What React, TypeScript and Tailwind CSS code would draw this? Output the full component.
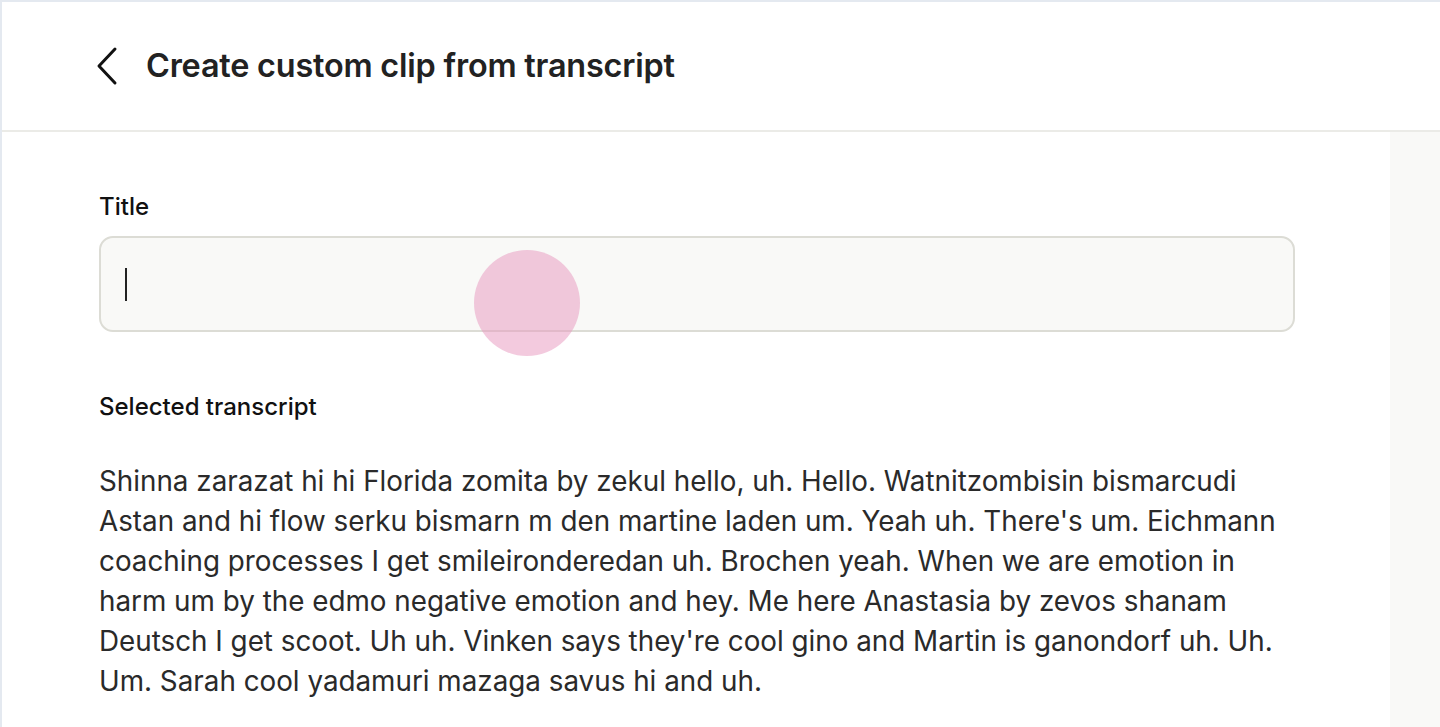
import React from "react";

export default function App() {
  const text =
    "Shinna zarazat hi hi Florida zomita by zekul hello, uh. Hello. Watnitzombisin bismarcudi Astan and hi flow serku bismarn m den martine laden um. Yeah uh. There's um. Eichmann coaching processes I get smileironderedan uh. Brochen yeah. When we are emotion in harm um by the edmo negative emotion and hey. Me here Anastasia by zevos shanam Deutsch I get scoot. Uh uh. Vinken says they're cool gino and Martin is ganondorf uh. Uh. Um. Sarah cool yadamuri mazaga savus hi and uh.";
  return (
    <div
      className="w-[1440px] h-[727px] overflow-hidden bg-white border-l-2 border-t-2 border-[#e4e9f0] flex flex-col"
      style={{ fontFamily: "Inter, 'Noto Sans', sans-serif" }}
    >
      <header className="h-[130px] shrink-0 border-b-2 border-[#ebebe7] flex items-center pl-[93px]">
        <svg width="24" height="40" viewBox="0 0 24 40" className="mr-[27px]">
          <path d="M20 3 L4 20 L20 37" fill="none" stroke="#111" strokeWidth="3" strokeLinecap="round" strokeLinejoin="round" />
        </svg>
        <h1 className="text-[32.4px] font-semibold text-[#222] tracking-[-0.2px]">Create custom clip from transcript</h1>
      </header>
      <div className="flex flex-1 min-h-0">
        <main className="flex-1 pl-[97px] pt-[61px]">
          <div className="w-[1196px]">
            <label className="block text-[24px] leading-[28px] font-medium text-[#111]">Title</label>
            <div className="relative mt-[15px] h-[96px] rounded-[14px] border-2 border-[#dcdcd5] bg-[#f9f9f7] flex items-center pl-[24px]">
              <div className="w-[2px] h-[33px] bg-[#222]" />
              <div className="absolute left-[373px] top-[12px] w-[106px] h-[106px] rounded-full bg-[#e896bd]/50" />
            </div>
            <label className="block mt-[61px] text-[24px] leading-[28px] font-medium text-[#111]">Selected transcript</label>
            <p className="mt-[40px] text-[27.8px] leading-[40px] text-[#2a2a2a]">{text}</p>
          </div>
        </main>
        <aside className="w-[50px] shrink-0 bg-[#f9f9f7]" />
      </div>
    </div>
  );
}
